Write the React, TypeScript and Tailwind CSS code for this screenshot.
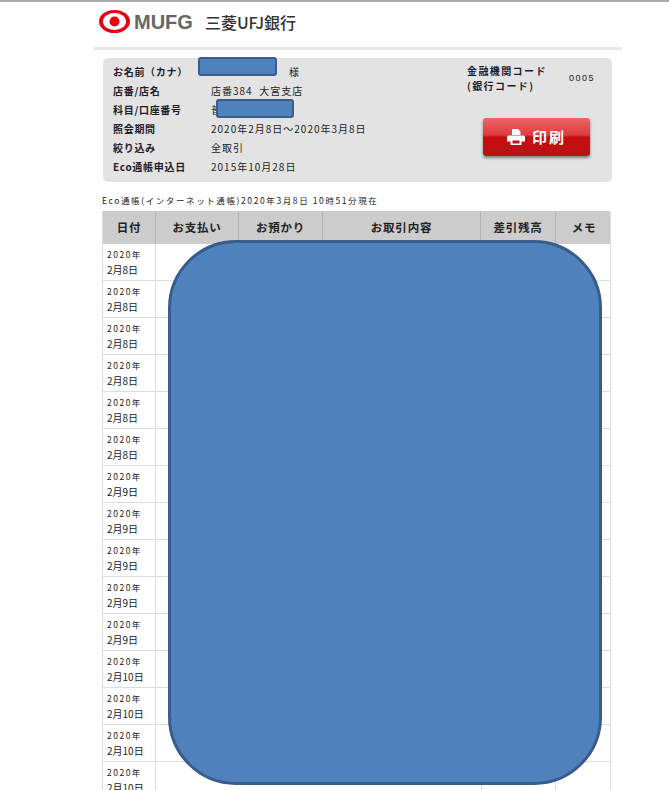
const dates = [
  "2月8日", "2月8日", "2月8日", "2月8日", "2月8日", "2月8日",
  "2月9日", "2月9日", "2月9日", "2月9日", "2月9日",
  "2月10日", "2月10日", "2月10日", "2月10日",
];

const info = [
  { label: "お名前\uFF08カナ\uFF09", value: "", honorific: true },
  { label: "店番/店名", value: "店番384  大宮支店" },
  { label: "科目/口座番号", value: "普" },
  { label: "照会期間", value: "2020年2月8日〜2020年3月8日" },
  { label: "絞り込み", value: "全取引" },
  { label: "Eco通帳申込日", value: "2015年10月28日" },
];

const headers = ["日付", "お支払い", "お預かり", "お取引内容", "差引残高", "メモ"];
const gridCols = "grid grid-cols-[53px_83px_84px_158px_75px_56px]";

const Logo = () => (
  <div className="flex items-center">
    <svg width="31" height="23" viewBox="0 0 31 23">
      <ellipse cx="15.5" cy="11.5" rx="15.5" ry="11.5" fill="#e60012" />
      <ellipse cx="15.5" cy="11.5" rx="11.5" ry="8.5" fill="#fff" />
      <circle cx="15.5" cy="11.5" r="5" fill="#e60012" />
    </svg>
    <span className="ml-[4px] font-['Liberation_Sans',sans-serif] text-[20px] leading-none font-bold text-[#666666]">MUFG</span>
    <span className="ml-[12px] font-['Noto_Sans_CJK_JP',sans-serif] text-[16px] leading-none font-medium text-[#333333]">三菱UFJ銀行</span>
  </div>
);

export default function App() {
  return (
    <div className="relative h-[790px] overflow-hidden bg-white font-['Noto_Sans_CJK_JP',sans-serif] text-[#222222]">
      <div className="h-[2px] bg-[#aaaaaa]" />
      <div className="ml-[94px] w-[528px]">
        <div className="h-[45px] pl-[5px] pt-[8px]">
          <Logo />
        </div>
        <div className="h-[3px] bg-[#e6e6e6]" />

        <div className="mt-[8px] ml-[9px] flex h-[124px] w-[509px] rounded-[5px] bg-[#e3e3e3] pl-[10px] pt-[4px]">
          <div className="w-[354px]">
            {info.map((row) => (
              <div key={row.label} className="flex h-[19px] items-center text-[10px] tracking-[0.7px] whitespace-pre">
                <span className="w-[98px] font-bold text-[#1c1c2c]">{row.label}</span>
                <span className="tracking-[1px]">{row.value}</span>
                {row.honorific && <span className="ml-[78px]">様</span>}
              </div>
            ))}
          </div>
          <div className="w-[135px] pt-[1px]">
            <div className="flex items-center">
              <div className="w-[102px] text-[10px] leading-[15px] font-bold tracking-[1.4px] text-[#1c1c2c]">
                <div>金融機関コード</div>
                <div>(銀行コード)</div>
              </div>
              <span className="mt-[2px] font-['Liberation_Sans',sans-serif] text-[9px] tracking-[1.5px]">0005</span>
            </div>
            <button className="mt-[25px] ml-[16px] flex h-[38px] w-[107px] items-center justify-center gap-[7px] rounded-[3px] bg-[linear-gradient(#ee6467_0%,#dd3c3e_45%,#c80c0e_50%,#b81416_100%)] text-[15px] font-bold tracking-[2px] text-white shadow-[0_2px_3px_rgba(0,0,0,0.45)]">
              <svg width="18" height="16" viewBox="0 0 18 16" fill="#fff">
                <path d="M5 0h6l2.500 2.500V6H5zM1.500 6.500h15A1.500 1.500 0 0 1 18 8v4.500h-3.500V16h-11v-3.500H0V8a1.500 1.500 0 0 1 1.500-1.500z" />
                <path d="M5.500 11.500h7v3h-7z" fill="#c81012" />
              </svg>
              印刷
            </button>
          </div>
        </div>

        <div className="mt-[12px] ml-[8px] text-[8.500px] leading-[13px] tracking-[1.6px] whitespace-nowrap">
          Eco通帳(インターネット通帳)2020年3月8日 10時51分現在
        </div>

        <div className="mt-[4px] ml-[8px] w-[509px] border-x border-[#dddddd]">
          <div className={`${gridCols} h-[33px] bg-[#cccccc]`}>
            {headers.map((h) => (
              <div key={h} className="flex items-center justify-center border-r border-[#b5b5b5] text-[11.500px] font-bold tracking-[0.8px] last:border-r-0">
                {h}
              </div>
            ))}
          </div>
          {dates.map((d, i) => (
            <div key={i} className={`${gridCols} h-[37px] border-b border-[#dddddd]`}>
              <div className="border-r border-[#dddddd] pl-[4px] pt-[2px]">
                <div className="text-[8.500px] leading-[17px] tracking-[1.5px]">2020年</div>
                <div className="text-[10px] leading-[14px]">{d}</div>
              </div>
              <div className="col-span-3" />
              <div className="border-x border-[#dddddd]" />
              <div />
            </div>
          ))}
        </div>
      </div>

      <div className="absolute top-[57px] left-[198px] h-[19px] w-[79px] rounded-[3px] border-2 border-[#385d8a] bg-[#4f81bd]" />
      <div className="absolute top-[99px] left-[216px] h-[19px] w-[78px] rounded-[3px] border-2 border-[#385d8a] bg-[#4f81bd]" />
      <div className="absolute top-[240px] left-[168px] h-[545px] w-[434px] rounded-[68px] border-[3px] border-[#385d8a] bg-[#4f81bd]" />
    </div>
  );
}
